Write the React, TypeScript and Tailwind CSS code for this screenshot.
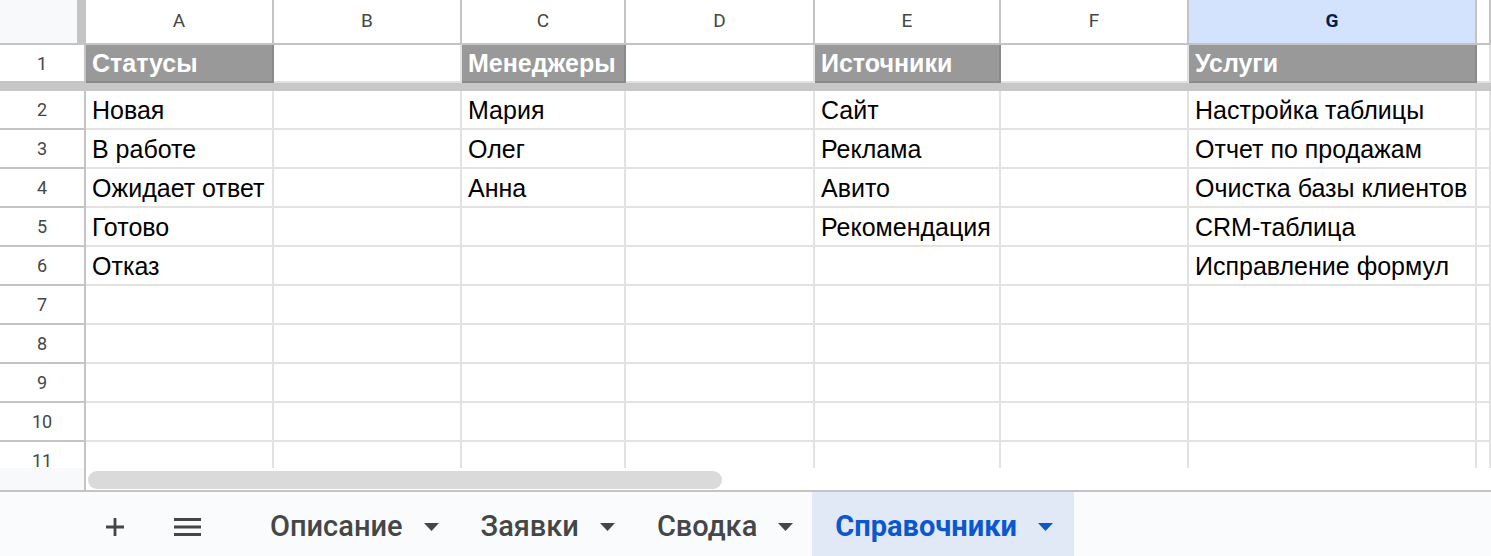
import React from "react";

// Шапка колонок
const COLS = ["A", "B", "C", "D", "E", "F", "G", ""];

// Первая строка (заголовки справочников)
const HEAD_ROW = ["Статусы", "", "Менеджеры", "", "Источники", "", "Услуги", ""];

// Данные строк 2-11
const ROWS: string[][] = [
  ["Новая", "", "Мария", "", "Сайт", "", "Настройка таблицы", ""],
  ["В работе", "", "Олег", "", "Реклама", "", "Отчет по продажам", ""],
  ["Ожидает ответ", "", "Анна", "", "Авито", "", "Очистка базы клиентов", ""],
  ["Готово", "", "", "", "Рекомендация", "", "CRM-таблица", ""],
  ["Отказ", "", "", "", "", "", "Исправление формул", ""],
  ["", "", "", "", "", "", "", ""],
  ["", "", "", "", "", "", "", ""],
  ["", "", "", "", "", "", "", ""],
  ["", "", "", "", "", "", "", ""],
  ["", "", "", "", "", "", "", ""],
];

const TABS = [
  { name: "Описание", active: false },
  { name: "Заявки", active: false },
  { name: "Сводка", active: false },
  { name: "Справочники", active: true },
];

const cellFont = { fontFamily: '"Liberation Sans", Arial, sans-serif' };

function Caret({ active }: { active: boolean }) {
  return (
    <svg width="15" height="8" viewBox="0 0 15 8">
      <polygon points="0,0 15,0 7.5,8" fill={active ? "#0b57d0" : "#444746"} />
    </svg>
  );
}

export default function App() {
  return (
    <div className="w-[1491px] h-[556px] bg-white overflow-hidden flex flex-col">
      {/* Сетка таблицы */}
      <div className="h-[468px] overflow-hidden">
        <div className="grid grid-cols-[86px_188px_188px_164px_189px_186px_188px_288px_1fr]">
          {/* Угол */}
          <div className="h-[45px] bg-[#f8f9fa] border-r-[9px] border-b-2 border-[#c4c4c4]" />
          {COLS.map((c, i) => (
            <div
              key={"h" + i}
              className={`h-[45px] border-r-2 border-b-2 border-[#c4c4c4] flex items-center justify-center font-['Roboto'] text-[19px] ${
                c === "G" ? "bg-[#d3e3fd] text-[#041e49] font-bold" : "bg-white text-[#444746]"
              }`}
            >
              {c}
            </div>
          ))}

          {/* Строка 1 */}
          <div className="h-[38px] border-r-2 border-b-2 border-[#c4c4c4] flex items-center justify-center font-['Roboto'] text-[18px] text-[#444746]">
            1
          </div>
          {HEAD_ROW.map((t, i) => (
            <div
              key={"r1" + i}
              style={cellFont}
              className={`h-[38px] border-r-2 border-b-2 flex items-center pl-[6px] pt-[2px] text-[25px] whitespace-nowrap ${
                t ? "bg-[#999999] border-[#8a8a8a] text-white font-bold" : "bg-white border-[#e2e2e2]"
              }`}
            >
              {t}
            </div>
          ))}

          {/* Граница закрепления */}
          <div className="col-span-full h-[8px] bg-[#c7c7c7]" />

          {ROWS.map((row, r) => (
            <React.Fragment key={"r" + r}>
              <div className="h-[39px] border-r-2 border-b-2 border-[#c4c4c4] flex items-center justify-center font-['Roboto'] text-[18px] text-[#444746]">
                {r + 2}
              </div>
              {row.map((t, i) => (
                <div
                  key={i}
                  style={cellFont}
                  className="h-[39px] border-r-2 border-b-2 border-[#e2e2e2] flex items-center pl-[6px] pt-[3px] text-[25px] text-black whitespace-nowrap"
                >
                  {t}
                </div>
              ))}
            </React.Fragment>
          ))}
        </div>
      </div>

      {/* Горизонтальная прокрутка */}
      <div className="h-[24px] flex border-b-2 border-[#c4c4c4]">
        <div className="w-[86px] bg-[#f8f9fa] border-r-2 border-[#c4c4c4]" />
        <div className="flex-1 pl-[2px] pt-[3px]">
          <div className="w-[634px] h-[18px] rounded-full bg-[#dadada]" />
        </div>
      </div>

      {/* Листы */}
      <div className="flex-1 bg-[#f9fbfd] flex items-stretch font-['Roboto'] text-[29px] font-medium">
        <div className="w-[247px] flex items-center pt-[6px]">
          <div className="w-[20px] ml-[105px] flex items-center justify-center">
            <svg width="20" height="20" viewBox="0 0 20 20">
              <path d="M10 1v18M1 10h18" stroke="#444746" strokeWidth="2.8" />
            </svg>
          </div>
          <div className="ml-[49px]">
            <svg width="27" height="18" viewBox="0 0 27 18">
              <path d="M0 1.5h27M0 9h27M0 16.5h27" stroke="#444746" strokeWidth="2.8" />
            </svg>
          </div>
        </div>
        {TABS.map((tab) => (
          <div
            key={tab.name}
            className={`flex items-center gap-[21px] pl-[23px] pr-[19px] pt-[6px] ${
              tab.active ? "bg-[#e1e9f7] text-[#0b57d0] font-bold pr-[21px]" : "text-[#444746]"
            }`}
          >
            <span>{tab.name}</span>
            <Caret active={tab.active} />
          </div>
        ))}
      </div>
    </div>
  );
}
